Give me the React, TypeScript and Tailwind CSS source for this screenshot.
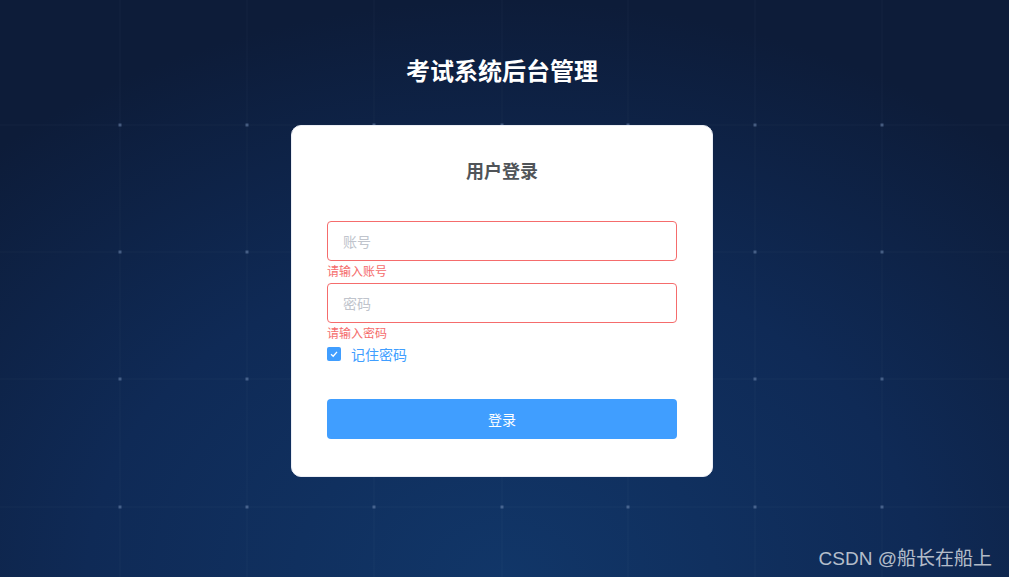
import React from 'react'

const cols = [-7, 120, 247, 374, 502, 628, 755, 882]
const rows = [-2, 125, 252, 379, 507]

function GridBackdrop() {
  return (
    <svg className="absolute inset-0 h-full w-full" width="1009" height="577">
      {cols.map((x) => (
        <rect key={'v' + x} x={x - 1} y={0} width={2} height={577} fill="rgba(255,255,255,0.014)" />
      ))}
      {rows.map((y) => (
        <rect key={'h' + y} x={0} y={y - 1} width={1009} height={2} fill="rgba(255,255,255,0.014)" />
      ))}
      {cols.map((x) =>
        rows.map((y) => (
          <rect key={x + '-' + y} x={x - 1.5} y={y - 1.5} width={3} height={3} fill="rgba(120,145,185,0.5)" />
        ))
      )}
    </svg>
  )
}

function Field({ placeholder, error }: { placeholder: string; error: string }) {
  return (
    <div className="relative mb-[22px]">
      <div className="flex h-10 items-center rounded border border-[#f56c6c] px-[15px] text-sm text-[#c0c4cc]">
        {placeholder}
      </div>
      <div className="absolute left-0 top-full pt-1 text-xs leading-3 text-[#f56c6c]">{error}</div>
    </div>
  )
}

export default function App() {
  return (
    <div
      className="relative h-[577px] w-full overflow-hidden bg-[radial-gradient(ellipse_75%_100%_at_50%_100%,#113668_0%,#0f2a56_55%,#0d1c39_100%)]"
      style={{ fontFamily: '"Noto Sans CJK SC", "Noto Sans", sans-serif' }}
    >
      <GridBackdrop />
      <div className="relative flex flex-col items-center pt-[54px] pr-[5px]">
        <h1 className="text-2xl leading-8 font-bold text-white">考试系统后台管理</h1>
        <div className="mt-[39px] w-[422px] rounded-[10px] border border-[#ebeef5] bg-white px-[35px] pt-[31px] pb-[37px]">
          <h2 className="text-center text-[18px] leading-[26px] font-bold text-[#505458]">用户登录</h2>
          <div className="mt-[38px]">
            <Field placeholder="账号" error="请输入账号" />
            <Field placeholder="密码" error="请输入密码" />
            <div className="flex h-[18px] items-center">
              <span className="flex h-[14px] w-[14px] items-center justify-center rounded-[2px] bg-[#409eff]">
                <svg width="10" height="10" viewBox="0 0 10 10">
                  <path d="M2 5.2 L4.2 7.2 L8 2.8" fill="none" stroke="white" strokeWidth="1.3" />
                </svg>
              </span>
              <span className="ml-[10px] text-sm text-[#409eff]">记住密码</span>
            </div>
            <button className="mt-9 flex h-10 w-full items-center justify-center rounded bg-[#409eff] text-sm text-white">
              登录
            </button>
          </div>
        </div>
      </div>
      <div
        className="absolute bottom-[6px] right-[17px] text-[19px] leading-6 text-white/70"
        style={{ fontFamily: '"Liberation Sans", "Noto Sans CJK SC", sans-serif' }}
      >
        CSDN @船长在船上
      </div>
    </div>
  )
}
